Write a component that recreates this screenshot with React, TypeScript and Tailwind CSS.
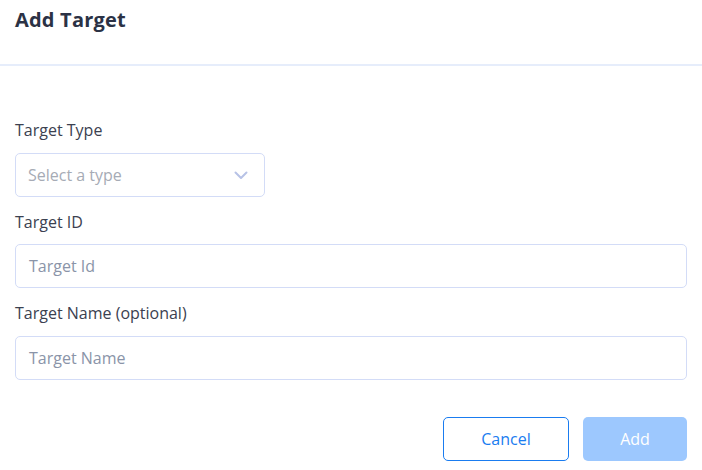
import React from "react";

export default function App() {
  return (
    <div className="w-[702px] h-[470px] bg-white overflow-hidden" style={{ fontFamily: "'Open Sans', Lato, sans-serif" }}>
      <div className="h-[64px] px-[15px] pt-[7px]">
        <h1 className="text-[20px] font-bold text-[#2b3245] leading-[26px] tracking-[0.2px]">Add Target</h1>
      </div>
      <div className="h-[2px] bg-[#e6edfb]" />
      <div className="px-[15px] pt-[54px]">
        <div className="text-[16px] text-[#3b4150] leading-[20px]">Target Type</div>
        <div className="mt-[13px] w-[250px] h-[44px] border border-[#d3dcf7] rounded-[5px] flex items-center justify-between pl-[12px] pr-[16px]">
          <span className="text-[16px] text-[#a6abb5]">Select a type</span>
          <svg width="14" height="9" viewBox="0 0 14 9" fill="none">
            <path d="M1.5 1.5L7 7L12.5 1.5" stroke="#b7c2e6" strokeWidth="2" strokeLinecap="round" strokeLinejoin="round" />
          </svg>
        </div>
        <div className="mt-[15px] text-[16px] text-[#3b4150] leading-[20px]">Target ID</div>
        <div className="mt-[12px] h-[44px] border border-[#d3dcf7] rounded-[5px] flex items-center pl-[13px]">
          <span className="text-[16px] text-[#8a94a8]">Target Id</span>
        </div>
        <div className="mt-[15px] text-[16px] text-[#3b4150] leading-[20px]">Target Name (optional)</div>
        <div className="mt-[13px] h-[44px] border border-[#d3dcf7] rounded-[5px] flex items-center pl-[13px]">
          <span className="text-[16px] text-[#8a94a8]">Target Name</span>
        </div>
        <div className="mt-[37px] flex justify-end gap-[14px]">
          <button className="w-[126px] h-[44px] border border-[#1a7cf0] rounded-[5px] text-[16px] text-[#1a7cf0] bg-white">Cancel</button>
          <button className="w-[104px] h-[44px] rounded-[5px] text-[16px] text-white bg-[#9dc8fe]">Add</button>
        </div>
      </div>
    </div>
  );
}
